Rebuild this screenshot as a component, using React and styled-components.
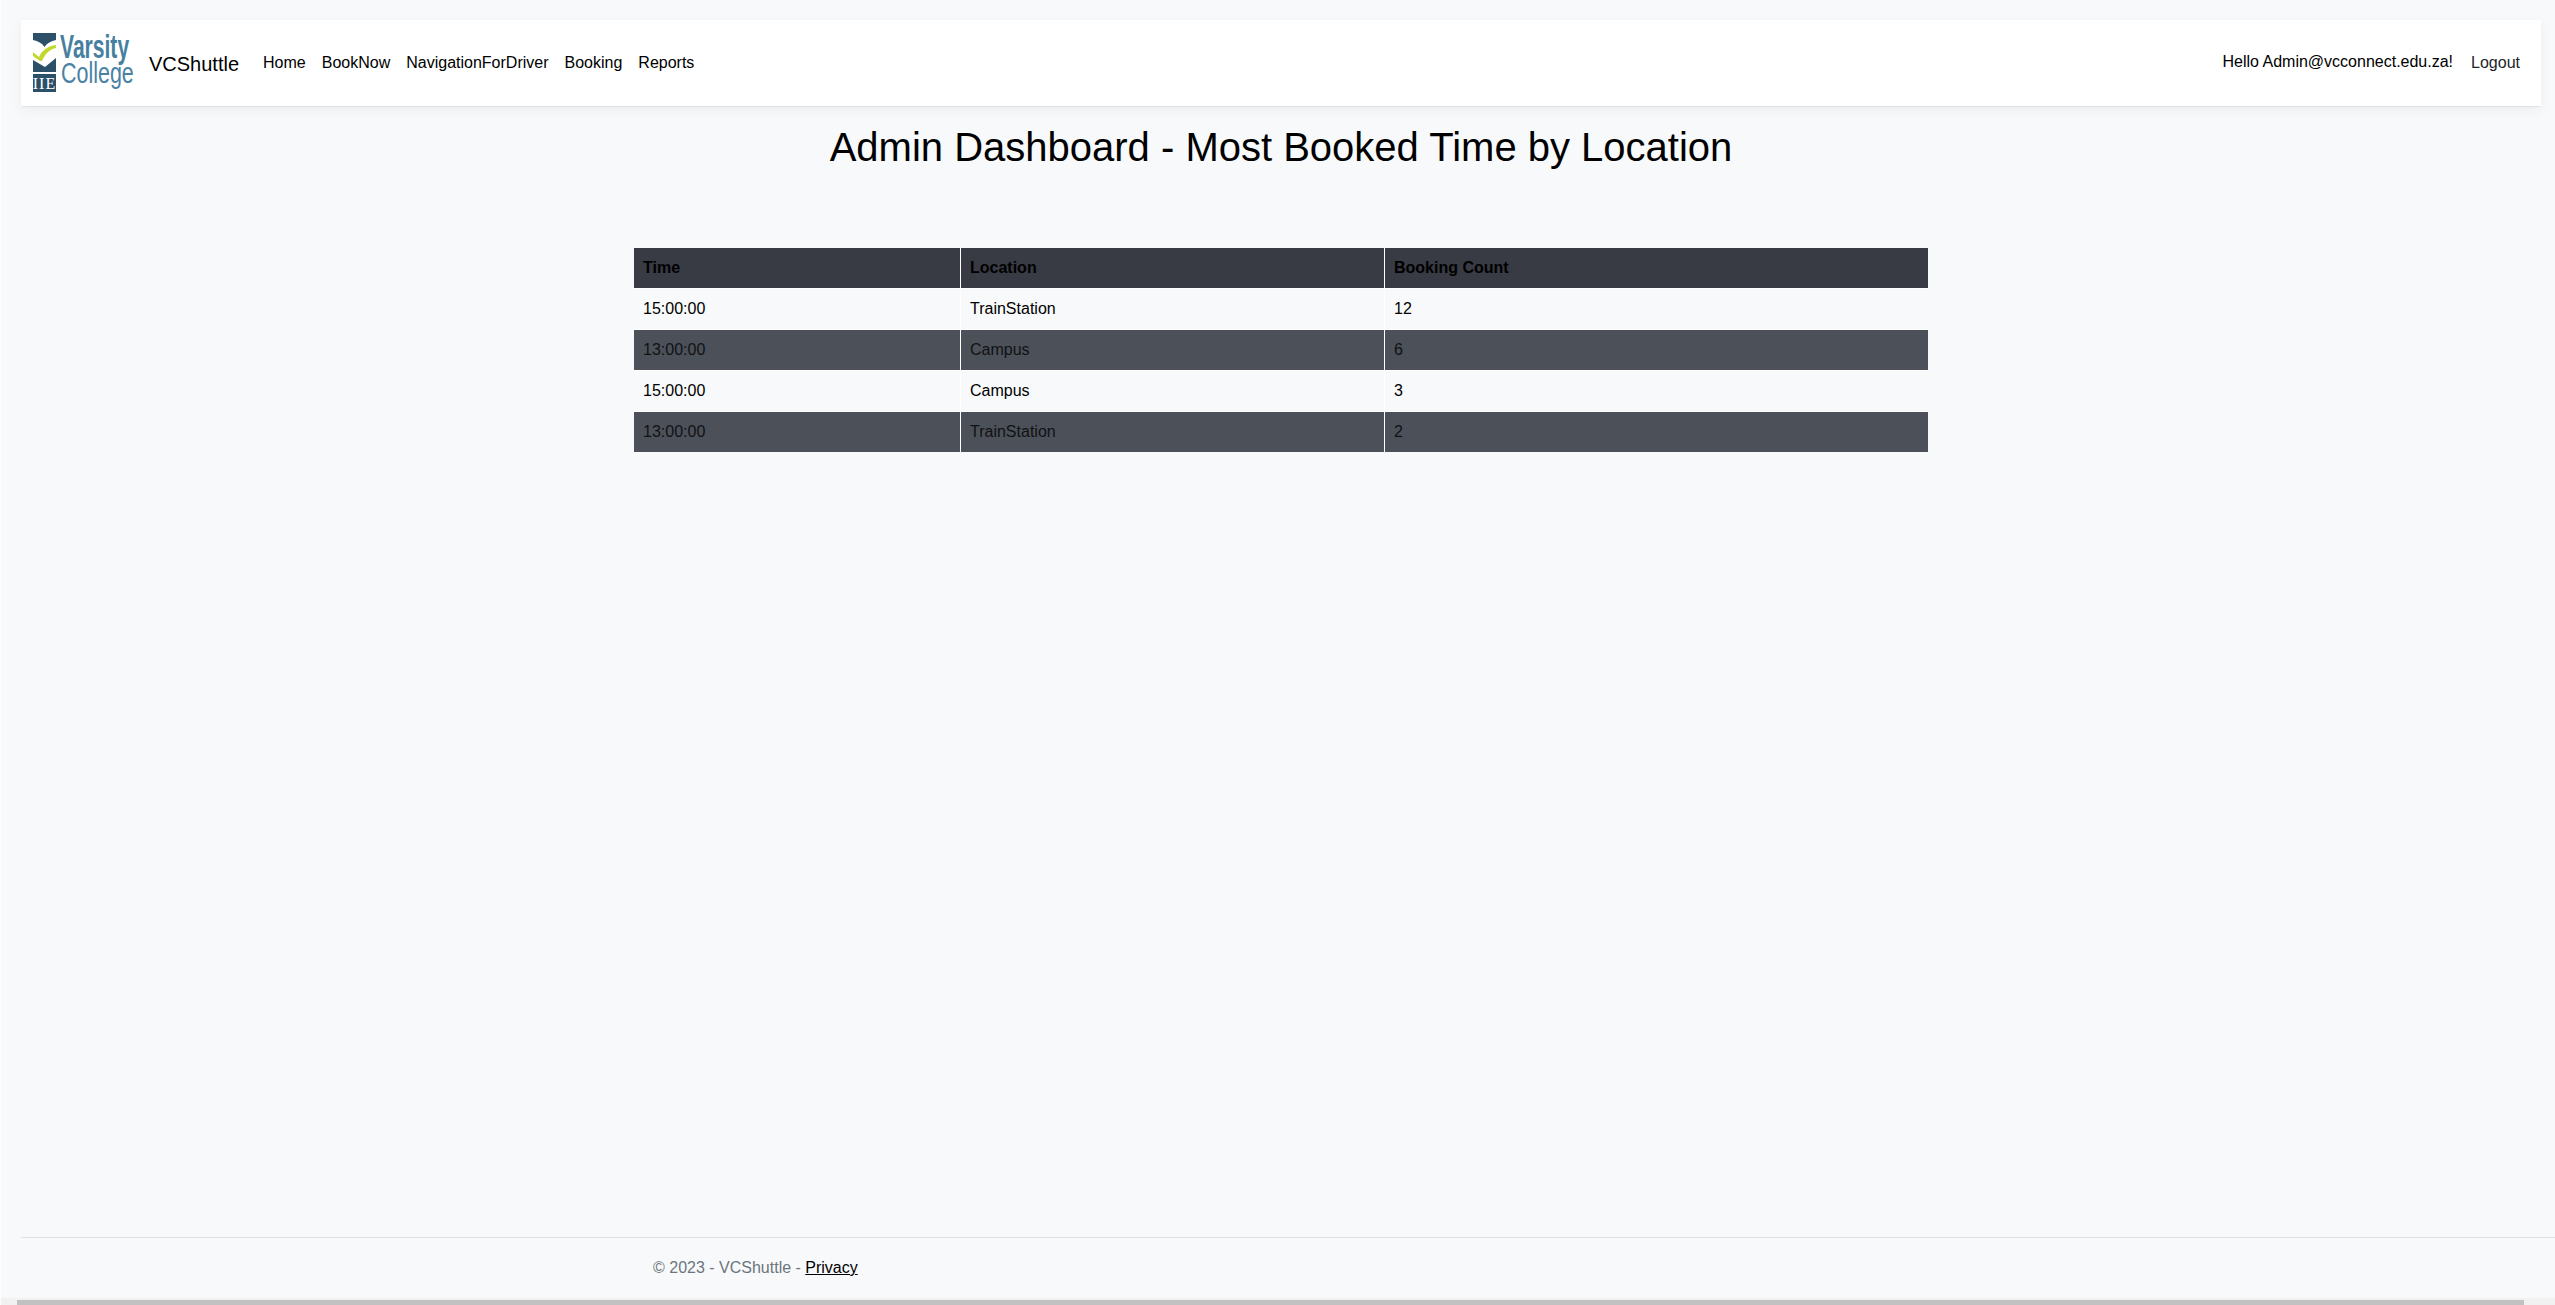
import React from "react";
import styled, { createGlobalStyle } from "styled-components";

const Global = createGlobalStyle`
  html, body { margin: 0; padding: 0; height: 100%; overflow: hidden; }
  body { background: #f8f9fa; font-family: "Liberation Sans", Arial, sans-serif; font-size: 16px; line-height: 24px; color: #000; }
`;
const Page = styled.div`
  position: relative; height: 1305px; display: flex; flex-direction: column;
  border-left: 1px solid #fdfdfe; box-sizing: border-box; overflow: hidden;
`;
const Caret = styled.div`
  position: absolute; left: -1px; top: 955px; width: 1px; height: 48px; background: #22272b;
`;
const Content = styled.div`
  flex: 1; display: flex; flex-direction: column; min-height: 0; padding: 20px 14px 0 20px;
`;
const Navbar = styled.nav`
  height: 86px; background: #fff; display: flex; align-items: center; padding: 0 21px 0 12px;
  box-shadow: 0 2px 1px -1px rgba(0,0,0,.06), 0 4px 12px rgba(0,0,0,.05); flex: none;
`;
const Brand = styled.a`
  font-size: 20px; line-height: 30px; margin: 0 16px 0 14px; color: #000; position: relative; top: 1px;
`;
const Links = styled.div`display: flex; flex: 1;`;
const NavLink = styled.a`padding: 0 8px; color: #000;`;
const Hello = styled.span`color: #000; position: relative; top: -1px;`;
const Logout = styled.a`color: #212529; margin-left: 18px;`;
const Heading = styled.h1`
  font-size: 40px; line-height: 48px; font-weight: 400; text-align: center; margin: 17px 0 0; color: #000;
`;
const Table = styled.table`
  width: 1294px; margin: 77px 0 0 613px; border-collapse: separate; border-spacing: 0; table-layout: fixed; flex: none;
`;
const Head = styled.th`
  background: #383a44; border-right: 1px solid #fff; border-bottom: 1px solid #fff; padding: 8px 8px 8px 9px; height: 41px; box-sizing: border-box;
  text-align: left; font-weight: 700; color: #000;
  &:last-child { border-right: 0; }
`;
const Cell = styled.td`
  background: ${p => (p.$dark ? "#4c5058" : "#f8f9fa")};
  color: ${p => (p.$dark ? "#101216" : "#000")};
  border-right: 1px solid #fff; border-bottom: 1px solid #fff; padding: 8px 8px 8px 9px; height: 41px; box-sizing: border-box;
  &:last-child { border-right: 0; }
`;
const BottomRow = styled.tr`td { border-bottom: 0; height: 40px; }`;
const Footer = styled.footer`
  height: 61px; flex: none; border-top: 1px solid #dee2e6; margin-right: -14px; padding: 18px 0 0 632px; box-sizing: border-box; color: #6c757d; margin-top: auto;
`;
const PrivacyLink = styled.a`color: #000; text-decoration: underline;`;
const Scrollbar = styled.div`
  height: 7px; flex: none; background: #f1f1f1; padding: 2px 31px 0 16px; box-sizing: border-box; display: flex;
`;
const Thumb = styled.div`flex: 1; background: #c1c1c1;`;

const Logo = () => (
  <svg width="102" height="86" viewBox="0 -13 102 86" style={{ flex: "none" }} role="img" aria-label="Varsity College">
    <path d="M0 0H23V7C18 8 14 10 11.5 14C9 10 5 8 0 7Z" fill="#2b5068" />
    <path d="M0 19L6 24C9 17 15 13 23 12V15C17 16 12 21 9 28H7L0 23Z" fill="#c3d82e" />
    <path d="M0 27L12 34L23 25V39H0Z" fill="#2b5068" />
    <rect y="41" width="23" height="18" fill="#2b5068" />
    <text x="11.5" y="56" textAnchor="middle" fontFamily="Liberation Serif" fontSize="16" fill="#fff" letterSpacing="1">IIE</text>
    <text transform="translate(27 25) scale(.62 1)" fontFamily="Liberation Sans" fontWeight="700" fontSize="34" fill="#47809f">Varsity</text>
    <text transform="translate(28 50) scale(.716 1)" fontFamily="Liberation Sans" fontSize="30" fill="#4a82a4">College</text>
  </svg>
);

const rows = [["15:00:00", "TrainStation", "12"], ["13:00:00", "Campus", "6"], ["15:00:00", "Campus", "3"], ["13:00:00", "TrainStation", "2"]];

export default function App() {
  return (
    <>
      <Global />
      <Page>
        <Caret />
        <Content>
          <Navbar>
            <Logo />
            <Brand>VCShuttle</Brand>
            <Links>
              {["Home", "BookNow", "NavigationForDriver", "Booking", "Reports"].map(l => <NavLink key={l}>{l}</NavLink>)}
            </Links>
            <Hello>Hello Admin@vcconnect.edu.za!</Hello>
            <Logout>Logout</Logout>
          </Navbar>
          <Heading>Admin Dashboard - Most Booked Time by Location</Heading>
          <Table>
            <colgroup><col style={{ width: 327 }} /><col style={{ width: 424 }} /><col /></colgroup>
            <thead><tr><Head>Time</Head><Head>Location</Head><Head>Booking Count</Head></tr></thead>
            <tbody>
              {rows.map((r, i) => {
                const R = i === rows.length - 1 ? BottomRow : "tr";
                return <R key={i}>{r.map((c, j) => <Cell key={j} $dark={i % 2 === 1}>{c}</Cell>)}</R>;
              })}
            </tbody>
          </Table>
          <Footer>© 2023 - VCShuttle - <PrivacyLink>Privacy</PrivacyLink></Footer>
        </Content>
        <Scrollbar><Thumb /></Scrollbar>
      </Page>
    </>
  );
}
